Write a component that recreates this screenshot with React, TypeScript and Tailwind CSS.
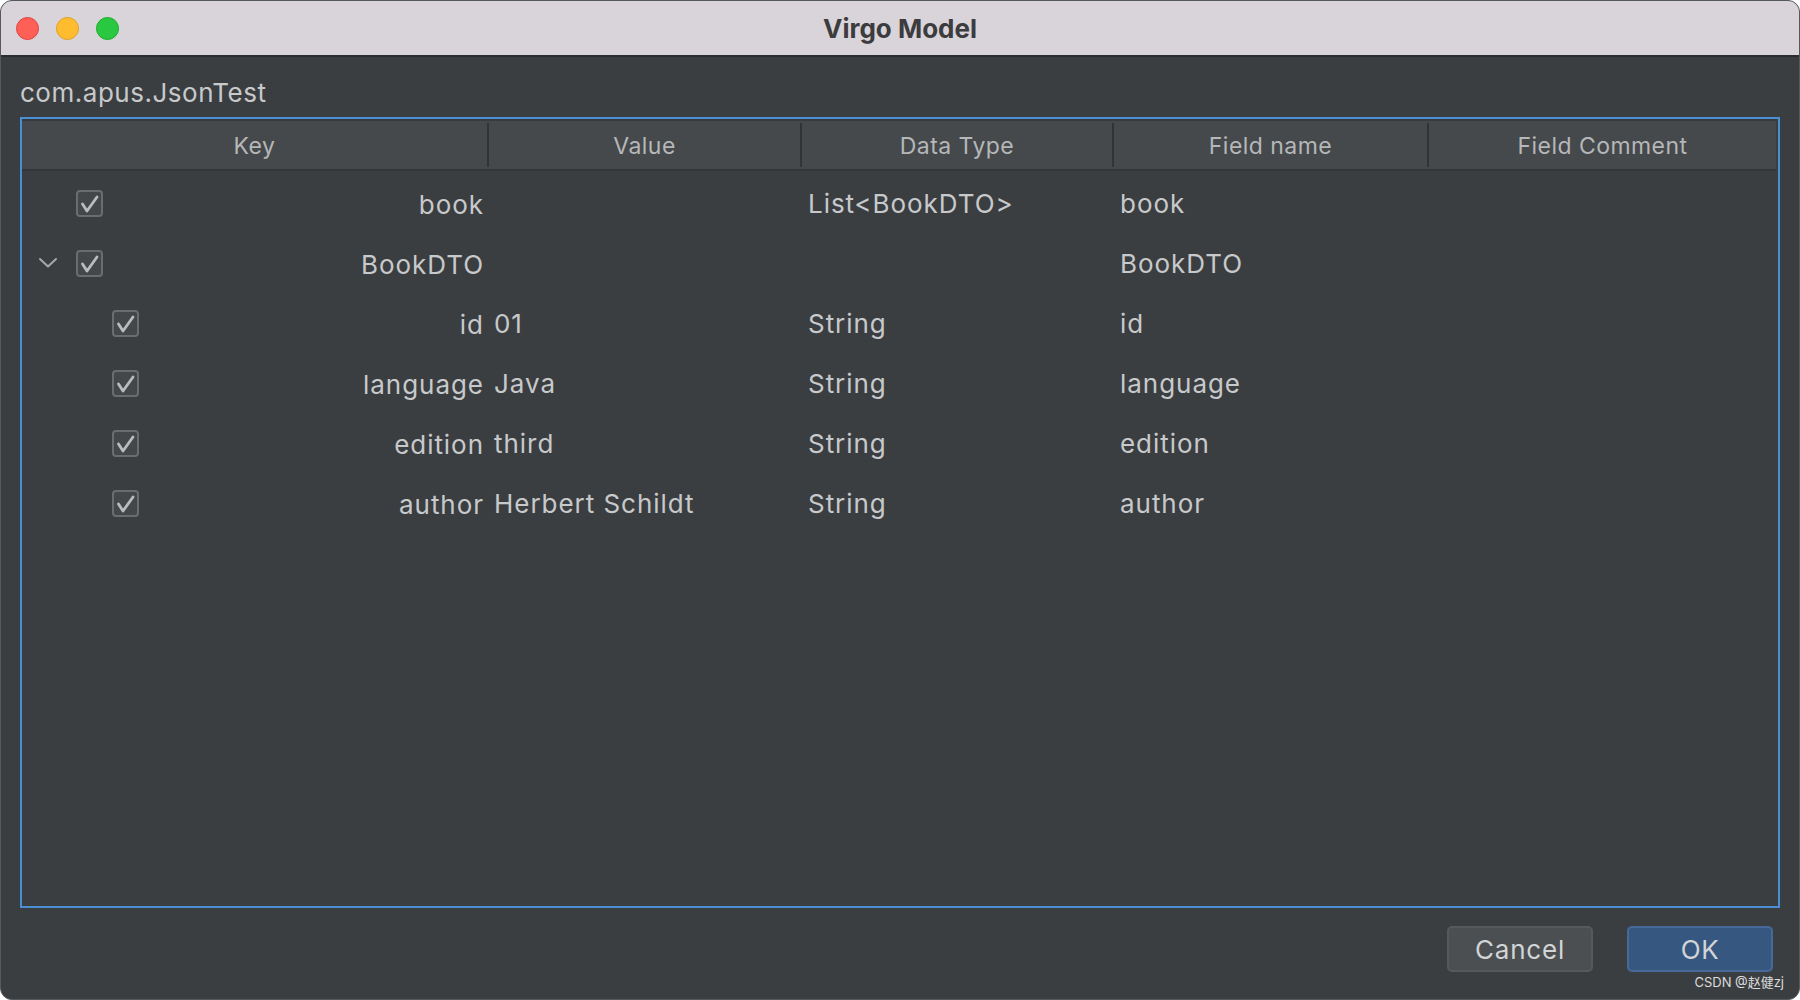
import React from "react";

type Row = {
  level: number;
  expandable?: boolean;
  keyName: string;
  value: string;
  type: string;
  field: string;
};

const rows: Row[] = [
  { level: 0, keyName: "book", value: "", type: "List<BookDTO>", field: "book" },
  { level: 0, expandable: true, keyName: "BookDTO", value: "", type: "", field: "BookDTO" },
  { level: 1, keyName: "id", value: "01", type: "String", field: "id" },
  { level: 1, keyName: "language", value: "Java", type: "String", field: "language" },
  { level: 1, keyName: "edition", value: "third", type: "String", field: "edition" },
  { level: 1, keyName: "author", value: "Herbert Schildt", type: "String", field: "author" },
];

function CheckBox() {
  return (
    <div className="w-[27px] h-[27px] rounded-[4px] border-2 border-[#6a6d70] bg-[#43474a] flex items-center justify-center">
      <svg width="27" height="27" viewBox="0 0 27 27" className="-m-[2px]">
        <path d="M6.5 14 L11 21 L21 7" fill="none" stroke="#b9bbbd" strokeWidth="2.8" strokeLinecap="round" strokeLinejoin="round" />
      </svg>
    </div>
  );
}

function Chevron() {
  return (
    <svg width="20" height="12" viewBox="0 0 20 12">
      <path d="M2 2 L10 9.5 L18 2" fill="none" stroke="#a6a8aa" strokeWidth="2" strokeLinecap="round" strokeLinejoin="round" />
    </svg>
  );
}

export default function App() {
  const font = { fontFamily: "Inter, 'Noto Sans', 'Liberation Sans', sans-serif" };
  return (
    <div className="w-[1800px] h-[1000px] bg-white" style={font}>
      <div className="relative w-full h-full rounded-[12px] overflow-hidden border border-[#56595c] bg-[#3b3e41] flex flex-col">
        {/* Title bar */}
        <div className="h-[56px] shrink-0 bg-[#d9d4da] border-b-2 border-[#2b2c2e] grid grid-cols-[1fr_auto_1fr] items-center">
          <div className="flex items-center gap-[17px] pl-[15px]">
            <div className="w-[23px] h-[23px] rounded-full bg-[#fe5f57] border border-[#e0443e]" />
            <div className="w-[23px] h-[23px] rounded-full bg-[#febc2e] border border-[#dea123]" />
            <div className="w-[23px] h-[23px] rounded-full bg-[#29c840] border border-[#1aab29]" />
          </div>
          <div className="text-[26px] font-bold text-[#3c3b3e] leading-[32px] pt-[1px]">Virgo Model</div>
          <div />
        </div>

        {/* Content */}
        <div className="flex-1 flex flex-col px-[19px]">
          <div className="pt-[20px] pb-[8px] text-[26px] leading-[32px] text-[#c7c9cb] tracking-[0.02em]">com.apus.JsonTest</div>

          <div className="h-[791px] border-2 border-[#4a8fd3] flex flex-col">
            {/* Header */}
            <div className="border-t-2 border-b-2 border-t-[#383a3d] border-b-[#343639] bg-[#45494b] h-[52px] grid grid-cols-[465px_313px_312px_315px_1fr] mr-[2px] text-[23px] text-[#b5b7b9]">
              {["Key", "Value", "Data Type", "Field name", "Field Comment"].map((h, i) => (
                <div key={h} className="flex items-center py-[2px]">
                  {i > 0 && <div className="w-[2px] h-full bg-[#313335]" />}
                  <div className="flex-1 text-center tracking-[0.02em] pt-[2px]">{h}</div>
                </div>
              ))}
            </div>

            {/* Rows */}
            <div className="pt-[2px] text-[26px] text-[#c7c9cb]">
              {rows.map((r) => (
                <div key={r.keyName} className="h-[60px] grid grid-cols-[465px_313px_312px_315px_1fr] items-center">
                  <div className="flex items-center pl-[16px]">
                    <div className="w-[20px] flex items-center">{r.expandable && <Chevron />}</div>
                    <div className={r.level === 1 ? "ml-[54px]" : "ml-[18px]"}>
                      <CheckBox />
                    </div>
                    <div className="flex-1 text-right pr-[3px] pt-[3px] tracking-[0.037em]">{r.keyName}</div>
                  </div>
                  <div className="pl-[7px] tracking-[0.037em]">{r.value}</div>
                  <div className="pl-[8px] tracking-[0.037em]">{r.type}</div>
                  <div className="pl-[8px] tracking-[0.037em]">{r.field}</div>
                  <div />
                </div>
              ))}
            </div>
          </div>

          {/* Buttons */}
          <div className="flex justify-end gap-[34px] mt-[18px] pr-[7px]">
            <div className="w-[146px] h-[46px] rounded-[5px] border-2 border-[#56595b] bg-[#4b4f51] flex items-center justify-center text-[26px] text-[#d2d4d6] tracking-[0.03em]">
              Cancel
            </div>
            <div className="w-[146px] h-[46px] rounded-[5px] border-2 border-[#46699a] bg-[#365880] flex items-center justify-center text-[26px] text-[#d2d4d6] tracking-[0.02em]">
              OK
            </div>
          </div>
        </div>

        <div
          className="absolute right-[15px] bottom-[9px] text-[13px] leading-[15px] text-[#dcdcdc]"
          style={{ fontFamily: "Inter, 'Noto Sans CJK SC', sans-serif" }}
        >
          CSDN @赵健zj
        </div>
      </div>
    </div>
  );
}
